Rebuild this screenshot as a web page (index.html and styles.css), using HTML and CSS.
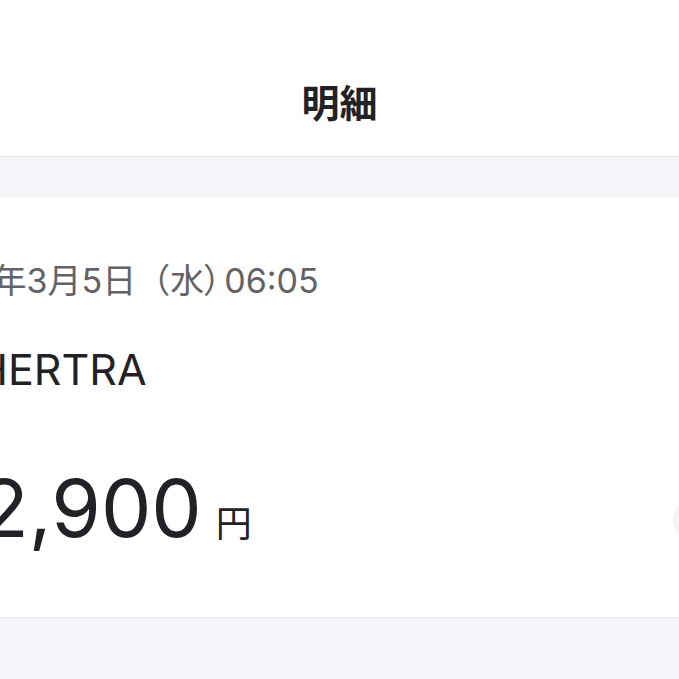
FILE: index.html
```html
<!DOCTYPE html>
<html lang="ja">

<head>
    <meta charset="UTF-8">
    <meta name="viewport" content="width=device-width, initial-scale=1.0">
    <title>明細</title>
    <link rel="stylesheet" href="styles.css">
</head>

<body>
    <header class="nav-bar">
        <h1 class="nav-title">明細</h1>
    </header>

    <div class="spacer"></div>

    <section class="detail-card">
        <p class="detail-date">2025年3月5日（水<span class="paren-close">）</span>06:05</p>
        <p class="detail-name">HERTRA</p>
        <div class="amount-row">
            <p class="detail-amount"><span class="amount-value">2,900</span><span class="amount-unit">円</span></p>
            <span class="more-button"></span>
        </div>
    </section>

    <div class="page-rest"></div>
</body>

</html>
```

FILE: styles.css
```css
html,
body {
    margin: 0;
    padding: 0;
    overflow: hidden;
}

body {
    font-family: Inter, "Noto Sans CJK JP", sans-serif;
    background-color: #f5f4f9;
    color: #222226;
}

.nav-bar {
    height: 157px;
    box-sizing: border-box;
    padding-top: 46px;
    display: flex;
    align-items: center;
    justify-content: center;
    background-color: #fff;
    border-bottom: 1px solid #e6e6e8;
}

.nav-title {
    margin: 0;
    font-family: "Noto Sans CJK JP", sans-serif;
    font-size: 38px;
    font-weight: 700;
    line-height: 50px;
    color: #222226;
}

.spacer {
    height: 40px;
}

.detail-card {
    background-color: #fff;
    padding: 63px 0 36px 0;
    margin-left: -24px;
    border-bottom: 1px solid #ececee;
}

.detail-card p {
    margin: 0;
    white-space: nowrap;
}

.detail-date {
    font-size: 34px;
    line-height: 42px;
    color: #626267;
    margin-left: -67px !important;
}

.paren-close {
    font-feature-settings: "palt";
    margin-right: 3px;
}

.detail-name {
    margin-top: 41px !important;
    font-size: 43px;
    line-height: 52px;
    color: #222226;
}

.amount-row {
    margin-top: 63px;
    display: flex;
    align-items: center;
    justify-content: space-between;
}

.detail-amount {
    line-height: 100px;
    margin-left: 4px !important;
}

.amount-value {
    font-size: 80px;
}

.amount-unit {
    font-family: "Noto Sans CJK JP", sans-serif;
    font-size: 36px;
    margin-left: 14px;
}

.more-button {
    width: 40px;
    height: 40px;
    border-radius: 50%;
    background-color: #f3f3f6;
    margin-right: -34px;
}

.page-rest {
    height: 100px;
}
```
